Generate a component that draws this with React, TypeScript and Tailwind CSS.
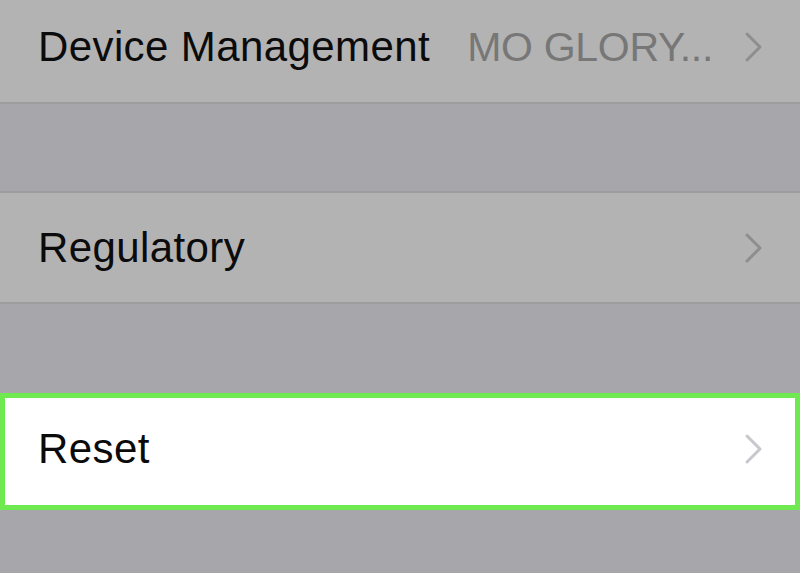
import React from "react";

function Chevron({ color }: { color: string }) {
  return (
    <svg width="20" height="32" viewBox="0 0 20 32" fill="none" className="shrink-0">
      <path d="M3 3 L16 16 L3 29" stroke={color} strokeWidth="3" strokeLinecap="round" strokeLinejoin="round" />
    </svg>
  );
}

function Row({
  label,
  value,
  chevron,
  className,
}: {
  label: string;
  value?: string;
  chevron: string;
  className: string;
}) {
  return (
    <div className={`flex items-center ${className}`}>
      <span className="text-[42px] leading-none text-[#0b0b0b] tracking-[0.4px]">{label}</span>
      <div className="flex-1" />
      {value && (
        <span className="text-[41px] leading-none text-[#777777] mr-[31px] tracking-[-0.3px]">{value}</span>
      )}
      <Chevron color={chevron} />
    </div>
  );
}

export default function App() {
  return (
    <div
      className="w-[800px] h-[573px] overflow-hidden bg-[#a7a6ab] flex flex-col"
      style={{ fontFamily: '"Liberation Sans", Arial, sans-serif' }}
    >
      <Row
        label="Device Management"
        value="MO GLORY..."
        chevron="#8e8e8e"
        className="h-[104px] pl-[38px] pr-[36px] pb-[8px] bg-[#b3b3b3] border-b-2 border-[#9d9d9f]"
      />
      <div className="h-[87px] shrink-0" />
      <Row
        label="Regulatory"
        chevron="#8e8e8e"
        className="h-[113px] pl-[38px] pr-[36px] bg-[#b3b3b3] border-y-2 border-[#9d9d9f]"
      />
      <div className="h-[89px] shrink-0" />
      <Row
        label="Reset"
        chevron="#c7c7cc"
        className="h-[117px] pl-[33px] pr-[31px] pb-[5px] bg-white border-[5px] border-[#6eea50]"
      />
    </div>
  );
}
